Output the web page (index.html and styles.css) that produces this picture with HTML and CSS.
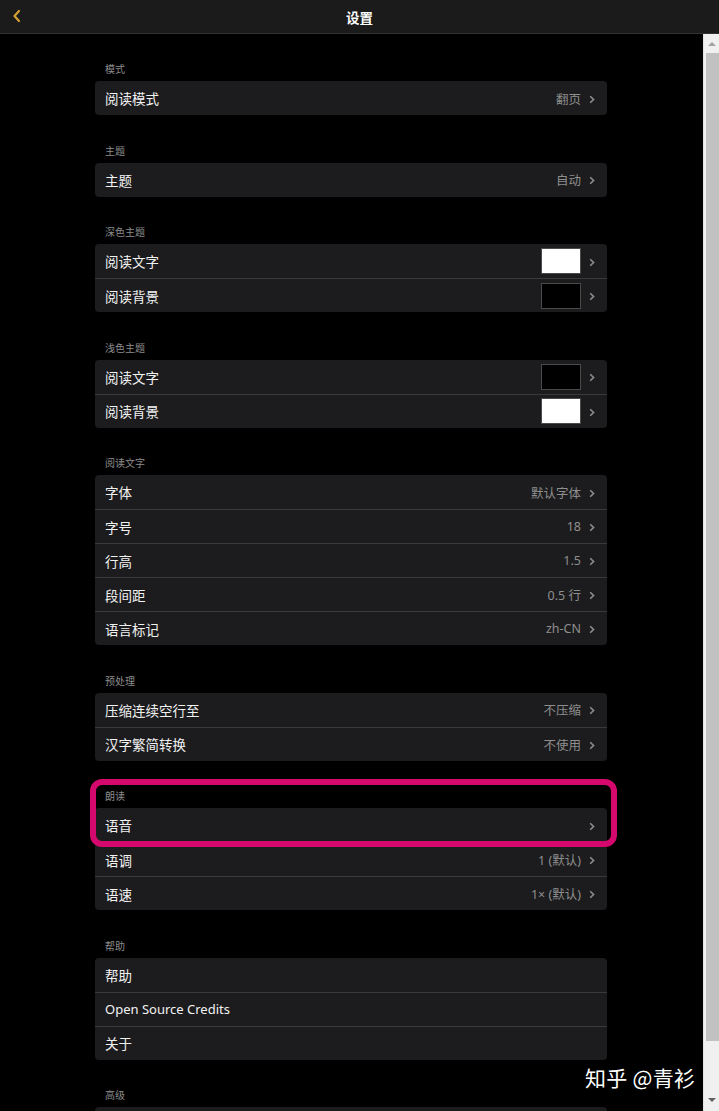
FILE: index.html
```html
<!DOCTYPE html>
<html lang="zh-CN">
<head>
    <meta charset="UTF-8">
    <meta name="viewport" content="width=device-width, initial-scale=1.0">
    <title>设置</title>
    <link rel="stylesheet" href="styles.css">
</head>
<body>

<div class="topbar">
    <svg class="back" width="10" height="14" viewBox="0 0 10 14"><polyline points="7,2 2.5,7 7,12" fill="none" stroke="#d3a233" stroke-width="2.2" stroke-linecap="round" stroke-linejoin="round"/></svg>
    <div class="title">设置</div>
</div>

<div class="page">
    <div class="content">

        <div class="section">
            <div class="section-label">模式</div>
            <div class="card">
                <div class="row"><span class="name">阅读模式</span><span class="value">翻页</span><span class="chev"></span></div>
            </div>
        </div>

        <div class="section">
            <div class="section-label">主题</div>
            <div class="card">
                <div class="row"><span class="name">主题</span><span class="value">自动</span><span class="chev"></span></div>
            </div>
        </div>

        <div class="section">
            <div class="section-label">深色主题</div>
            <div class="card">
                <div class="row"><span class="name">阅读文字</span><span class="swatch white"></span><span class="chev"></span></div>
                <div class="row"><span class="name">阅读背景</span><span class="swatch black"></span><span class="chev"></span></div>
            </div>
        </div>

        <div class="section">
            <div class="section-label">浅色主题</div>
            <div class="card">
                <div class="row"><span class="name">阅读文字</span><span class="swatch black"></span><span class="chev"></span></div>
                <div class="row"><span class="name">阅读背景</span><span class="swatch white"></span><span class="chev"></span></div>
            </div>
        </div>

        <div class="section">
            <div class="section-label">阅读文字</div>
            <div class="card">
                <div class="row"><span class="name">字体</span><span class="value">默认字体</span><span class="chev"></span></div>
                <div class="row"><span class="name">字号</span><span class="value">18</span><span class="chev"></span></div>
                <div class="row"><span class="name">行高</span><span class="value">1.5</span><span class="chev"></span></div>
                <div class="row"><span class="name">段间距</span><span class="value">0.5 行</span><span class="chev"></span></div>
                <div class="row"><span class="name">语言标记</span><span class="value">zh-CN</span><span class="chev"></span></div>
            </div>
        </div>

        <div class="section">
            <div class="section-label">预处理</div>
            <div class="card">
                <div class="row"><span class="name">压缩连续空行至</span><span class="value">不压缩</span><span class="chev"></span></div>
                <div class="row"><span class="name">汉字繁简转换</span><span class="value">不使用</span><span class="chev"></span></div>
            </div>
        </div>

        <div class="section">
            <div class="section-label">朗读</div>
            <div class="card">
                <div class="row"><span class="name">语音</span><span class="value"></span><span class="chev"></span></div>
                <div class="row"><span class="name">语调</span><span class="value">1 (默认)</span><span class="chev"></span></div>
                <div class="row"><span class="name">语速</span><span class="value">1× (默认)</span><span class="chev"></span></div>
            </div>
        </div>

        <div class="section">
            <div class="section-label">帮助</div>
            <div class="card">
                <div class="row"><span class="name">帮助</span></div>
                <div class="row"><span class="name latin">Open Source Credits</span></div>
                <div class="row"><span class="name">关于</span></div>
            </div>
        </div>

        <div class="section">
            <div class="section-label">高级</div>
            <div class="card">
                <div class="row"><span class="name"></span></div>
            </div>
        </div>

    </div>

    <div class="scrollbar">
        <div class="arrow up"></div>
        <div class="thumb"></div>
        <div class="arrow down"></div>
    </div>
</div>

<div class="highlight"></div>
<div class="watermark">知乎 @青衫</div>

</body>
</html>
```

FILE: styles.css
```css
* {
    box-sizing: border-box;
    margin: 0;
    padding: 0;
}
body {
    font-family: "Noto Sans", "Noto Sans CJK SC", sans-serif;
    background: #000;
    color: #fff;
    width: 719px;
    height: 1111px;
    overflow: hidden;
    position: relative;
}
.topbar {
    height: 34px;
    background: #1b1b1b;
    border-bottom: 1px solid #323232;
    display: flex;
    align-items: center;
    justify-content: center;
    position: relative;
}
.back {
    position: absolute;
    left: 12px;
    top: 9px;
}
.title {
    font-family: "Noto Sans CJK SC", sans-serif;
    font-size: 13.5px;
    font-weight: bold;
    color: #fff;
}
.page {
    display: flex;
    height: 1077px;
}
.content {
    flex: 1;
    padding: 0 96px 0 95px;
    overflow: hidden;
}
.section {
    padding-top: 28.5px;
}
.section:first-child {
    padding-top: 28px;
}
.section-label {
    font-family: "Noto Sans CJK SC", sans-serif;
    font-size: 10px;
    line-height: 14px;
    color: #8c8c8c;
    padding-left: 10px;
    margin-bottom: 5px;
}
.card {
    background: #1c1c1e;
    border-radius: 4px;
    overflow: hidden;
}
.row {
    height: 34px;
    display: flex;
    align-items: center;
    padding: 0 12px 0 10px;
}
.row + .row {
    border-top: 1px solid #3a3a3c;
}
.name {
    flex: 1;
    font-family: "Noto Sans CJK SC", sans-serif;
    font-size: 13.5px;
    color: #f2f2f2;
}
.name.latin {
    font-family: "Noto Sans", sans-serif;
    font-size: 13px;
}
.value {
    font-family: "Noto Sans", "Noto Sans CJK SC", sans-serif;
    font-size: 12.5px;
    color: #8e8e8e;
}
.chev {
    width: 6px;
    height: 9px;
    margin-left: 8px;
    margin-top: 2px;
    background: url("data:image/svg+xml,%3Csvg xmlns='http://www.w3.org/2000/svg' width='6' height='9' viewBox='0 0 6 9'%3E%3Cpolyline points='1.2,1.2 4.6,4.5 1.2,7.8' fill='none' stroke='%238e8e8e' stroke-width='1.6'/%3E%3C/svg%3E") no-repeat center;
}
.swatch {
    width: 40px;
    height: 26px;
    border: 1px solid #4a4a4a;
}
.swatch.white {
    background: #fff;
}
.swatch.black {
    background: #000;
}
.scrollbar {
    width: 16px;
    background: #f0f0f0;
    border-left: 1px solid #e2e2e2;
    display: flex;
    flex-direction: column;
    align-items: center;
}
.thumb {
    width: 13px;
    height: 988px;
    background: #c1c1c1;
    margin: 0 0 0 1px;
    flex: none;
}
.arrow {
    width: 0;
    height: 0;
    border-left: 4px solid transparent;
    border-right: 4px solid transparent;
}
.arrow.up {
    border-bottom: 4px solid #a3a3a3;
    margin: 8px 0 7px;
}
.arrow.down {
    border-top: 4px solid #606060;
    margin-top: auto;
    margin-bottom: 9px;
}
.highlight {
    position: absolute;
    left: 90px;
    top: 779px;
    width: 527px;
    height: 68px;
    border: 6px solid #d5096d;
    border-radius: 12px;
}
.watermark {
    position: absolute;
    left: 585px;
    top: 1062px;
    font-family: "Noto Sans CJK SC", sans-serif;
    font-size: 21px;
    color: #fff;
    letter-spacing: 0.3px;
}
```
